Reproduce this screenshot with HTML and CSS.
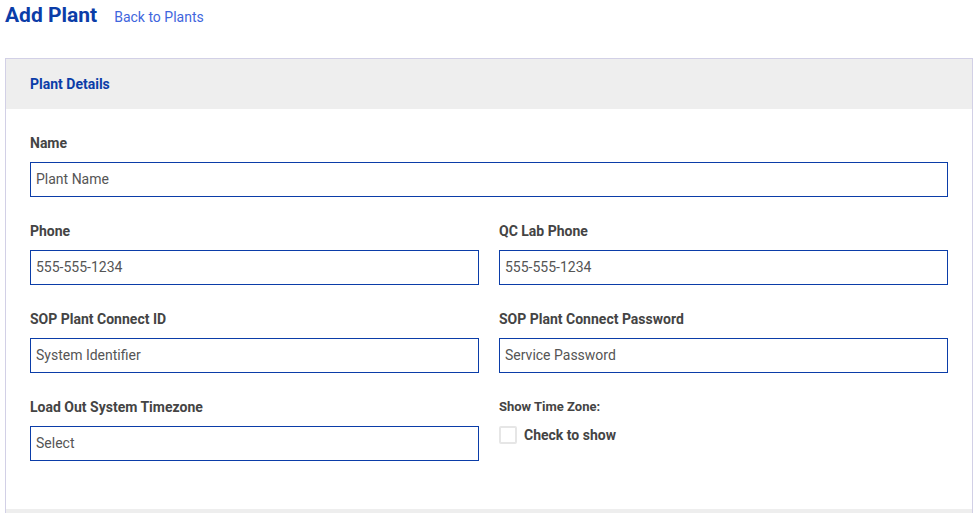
FILE: index.html
```html
<!DOCTYPE html>
<html>
<head>
<meta charset="utf-8">
<link rel="stylesheet" href="styles.css">
</head>
<body>
<div class="page">
  <div class="title-row">
    <h1 class="title">Add Plant</h1>
    <a class="back" href="#">Back to Plants</a>
  </div>
  <div class="card">
    <div class="card-header">Plant Details</div>
    <div class="card-body">
      <div class="field">
        <label class="label">Name</label>
        <div class="input placeholder">Plant Name</div>
      </div>
      <div class="grid">
        <div class="field">
          <label class="label">Phone</label>
          <div class="input">555-555-1234</div>
        </div>
        <div class="field">
          <label class="label">QC Lab Phone</label>
          <div class="input">555-555-1234</div>
        </div>
        <div class="field">
          <label class="label">SOP Plant Connect ID</label>
          <div class="input">System Identifier</div>
        </div>
        <div class="field">
          <label class="label">SOP Plant Connect Password</label>
          <div class="input">Service Password</div>
        </div>
        <div class="field last">
          <label class="label">Load Out System Timezone</label>
          <div class="input">Select</div>
        </div>
        <div class="field last">
          <label class="label small">Show Time Zone:</label>
          <div class="check-row">
            <span class="checkbox"></span>
            <span class="check-label">Check to show</span>
          </div>
        </div>
      </div>
    </div>
    <div class="card-footer"></div>
  </div>
</div>
</body>
</html>
```
FILE: styles.css
```css
html, body {
  margin: 0;
  padding: 0;
  background: #fff;
  font-family: Roboto, "Liberation Sans", sans-serif;
}
.page {
  padding: 0 6px 0 5px;
}
.title-row {
  display: flex;
  align-items: baseline;
  height: 30px;
  margin-bottom: 28px;
}
.title {
  margin: 0;
  font-size: 21px;
  line-height: 30px;
  font-weight: 700;
  color: #0b3da8;
}
.back {
  margin-left: 17px;
  font-size: 14px;
  color: #3f66dd;
  text-decoration: none;
}
.card {
  border: 1px solid #d2d0e6;
  border-bottom: none;
}
.card-header {
  background: #eeeeee;
  height: 50px;
  line-height: 50px;
  padding-left: 24px;
  font-size: 14px;
  font-weight: 700;
  color: #0b3da8;
}
.card-body {
  padding: 24px 24px 0 24px;
}
.grid {
  display: grid;
  grid-template-columns: 1fr 1fr;
  column-gap: 20px;
}
.field {
  margin-bottom: 24px;
}
.field.last {
  margin-bottom: 48px;
}
.label {
  display: block;
  font-size: 14px;
  font-weight: 700;
  line-height: 20px;
  color: #444;
  margin-bottom: 9px;
}
.label.small {
  font-size: 13px;
}
.input {
  box-sizing: border-box;
  height: 35px;
  border: 1px solid #0b3da8;
  padding-left: 5px;
  font-size: 14px;
  line-height: 33px;
  color: #555;
}
.check-row {
  display: flex;
  align-items: center;
  height: 18px;
  margin-top: 1px;
}
.checkbox {
  box-sizing: border-box;
  width: 18px;
  height: 18px;
  border: 2px solid #e6e6e6;
  border-radius: 2px;
  margin-right: 7px;
}
.check-label {
  font-size: 14px;
  font-weight: 700;
  color: #444;
}
.card-footer {
  background: #eeeeee;
  height: 20px;
}
```
